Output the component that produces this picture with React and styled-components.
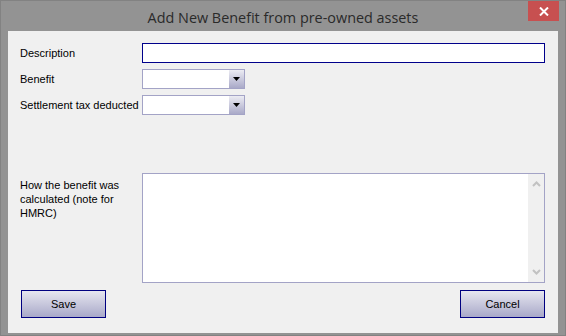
import React from "react";
import styled, { createGlobalStyle } from "styled-components";

const Global = createGlobalStyle`
  html, body { margin: 0; padding: 0; background: #939393; }
  body { font-family: "Liberation Sans", Arial, sans-serif; }
  * { box-sizing: border-box; }
`;

const Window = styled.div`
  position: relative;
  width: 566px;
  height: 336px;
  background: #939393;
  border: 1px solid #828282;
  display: flex;
  flex-direction: column;
`;

const TitleBar = styled.div`
  height: 30px;
  display: flex;
  align-items: center;
  justify-content: center;
  font-family: "Segoe UI", "Open Sans", sans-serif;
  font-size: 14.4px;
  color: #2a2a2a;
  padding-top: 2px;
`;

const CloseButton = styled.div`
  position: absolute;
  top: 0;
  right: 6px;
  width: 31px;
  height: 20px;
  background: #c75050;
  display: flex;
  align-items: center;
  justify-content: center;
`;

const Client = styled.div`
  flex: 1;
  margin: 0 7px 2px 7px;
  background: #f0f0f0;
  padding: 12px 12px 15px 12px;
  display: flex;
  flex-direction: column;
  font-size: 11px;
  color: #000;
`;

const Form = styled.div`
  display: grid;
  grid-template-columns: 122px 1fr;
  row-gap: 6px;
  align-items: center;
`;

const Label = styled.div`
  font-size: 11px;
  line-height: 14px;
  align-self: ${(p) => (p.$top ? "start" : "center")};
  padding-top: ${(p) => (p.$top ? "5px" : "0")};
  white-space: ${(p) => (p.$top ? "normal" : "nowrap")};
  width: ${(p) => (p.$top ? "112px" : "auto")};
`;

const TextInput = styled.div`
  height: 20px;
  background: #fff;
  border: 1px solid #00008b;
  margin-right: 1px;
`;

const Combo = styled.div`
  width: 103px;
  height: 20px;
  background: #fff;
  border: 1px solid #a3a3c6;
  display: flex;
  justify-content: flex-end;
`;

const ComboArrow = styled.div`
  width: 15px;
  height: 100%;
  background: linear-gradient(#ececf3, #a9a9c8);
  display: flex;
  align-items: center;
  justify-content: center;
`;

const MemoRow = styled.div`
  grid-column: 1 / -1;
  display: grid;
  grid-template-columns: 122px 1fr;
  margin-top: 52px;
`;

const Memo = styled.div`
  height: 110px;
  background: #fff;
  border: 1px solid #a3a3c6;
  display: flex;
  justify-content: flex-end;
  margin-right: 1px;
`;

const ScrollBar = styled.div`
  width: 16px;
  height: 100%;
  background: #f0f0f0;
  display: flex;
  flex-direction: column;
  justify-content: space-between;
  align-items: center;
  padding: 7px 0;
`;

const Buttons = styled.div`
  display: flex;
  justify-content: space-between;
  margin-top: 7px;
  padding: 0 1px 0 1px;
`;

const Button = styled.div`
  width: 85px;
  height: 28px;
  border: 1px solid #000080;
  background: linear-gradient(#e6e6f0, #a9a9c9);
  display: flex;
  align-items: center;
  justify-content: center;
  font-size: 11px;
  color: #000;
`;

const Arrow = () => (
  <svg width="7" height="4" viewBox="0 0 7 4">
    <path d="M0 0h7L3.5 4z" fill="#000" />
  </svg>
);

const Chevron = ({ up }) => (
  <svg width="9" height="6" viewBox="0 0 9 6">
    <path
      d={up ? "M1 5L4.5 1.5L8 5" : "M1 1L4.5 4.5L8 1"}
      fill="none"
      stroke="#c2c2c2"
      strokeWidth="2"
    />
  </svg>
);

export default function App() {
  return (
    <>
      <Global />
      <Window>
        <TitleBar>Add New Benefit from pre-owned assets</TitleBar>
        <CloseButton>
          <svg width="10" height="9" viewBox="0 0 10 9">
            <path d="M1 0.5L9 8.5M9 0.5L1 8.5" stroke="#fff" strokeWidth="2" />
          </svg>
        </CloseButton>
        <Client>
          <Form>
            <Label>Description</Label>
            <TextInput />
            <Label>Benefit</Label>
            <Combo>
              <ComboArrow>
                <Arrow />
              </ComboArrow>
            </Combo>
            <Label>Settlement tax deducted</Label>
            <Combo>
              <ComboArrow>
                <Arrow />
              </ComboArrow>
            </Combo>
            <MemoRow>
              <Label $top>How the benefit was calculated (note for HMRC)</Label>
              <Memo>
                <ScrollBar>
                  <Chevron up />
                  <Chevron />
                </ScrollBar>
              </Memo>
            </MemoRow>
          </Form>
          <Buttons>
            <Button>Save</Button>
            <Button>Cancel</Button>
          </Buttons>
        </Client>
      </Window>
    </>
  );
}
